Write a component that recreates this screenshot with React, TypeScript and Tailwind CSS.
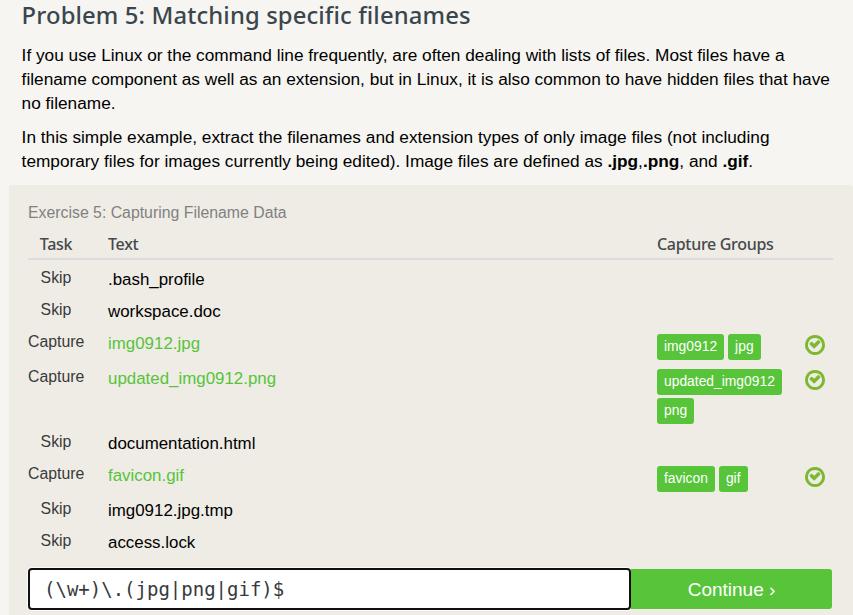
type Row = { text: string; groups?: string[]; height: string };

const rows: Row[] = [
  { text: '.bash_profile', height: 'h-8' },
  { text: 'workspace.doc', height: 'h-8' },
  { text: 'img0912.jpg', groups: ['img0912', 'jpg'], height: 'h-[35px]' },
  { text: 'updated_img0912.png', groups: ['updated_img0912', 'png'], height: 'h-[65px]' },
  { text: 'documentation.html', height: 'h-8' },
  { text: 'favicon.gif', groups: ['favicon', 'gif'], height: 'h-[35px]' },
  { text: 'img0912.jpg.tmp', height: 'h-8' },
  { text: 'access.lock', height: 'h-8' },
];

function CheckCircle() {
  return (
    <svg className="mt-2 size-5 fill-[#7db831]" viewBox="0 128 1536 1536" aria-hidden="true">
      <path d="M1171 723l-422 422q-19 19-45 19t-45-19l-294-294q-19-19-19-45t19-45l102-102q19-19 45-19t45 19l147 147 275-275q19-19 45-19t45 19l102 102q19 19 19 45t-19 45zm141 173q0-148-73-273t-198-198-273-73-273 73-198 198-73 273 73 273 198 198 273 73 273-73 198-198 73-273zm224 0q0 209-103 385.5t-279.5 279.5-385.5 103-385.5-103-279.5-279.5-103-385.5 103-385.5 279.5-279.5 385.5-103 385.5 103 279.5 279.5 103 385.5z" />
    </svg>
  );
}

function TableRow({ text, groups, height }: Row) {
  return (
    <div className={`grid grid-cols-[56px_573px_148px_28px] ${height}`}>
      <div className="pt-[3px] text-center text-[15.84px] leading-6 text-[#373a3c]">{groups ? 'Capture' : 'Skip'}</div>
      <div className={`pt-[5px] pl-6 text-[16.9px] leading-6 ${groups ? 'text-[#57c43a]' : 'text-black'}`}>{text}</div>
      <div className="flex flex-wrap content-start gap-x-1 gap-y-[3.45px] pt-[7px]">
        {groups?.map((g) => (
          <span key={g} className="h-[26px] rounded-[3px] bg-[#57c43a] px-[7px] text-[13.85px] leading-[25px] text-white">
            {g}
          </span>
        ))}
      </div>
      <div>{groups && <CheckCircle />}</div>
    </div>
  );
}

export default function App() {
  return (
    <div className="h-[615px] overflow-hidden bg-[#f6f5f1] font-['Liberation_Sans',Arial,sans-serif] text-[17.25px] leading-6 text-black">
      <header className="h-[185px] pl-[21.6px]">
        <h1 className="h-[43px] font-['Noto_Sans',sans-serif] text-[23.8px] leading-[30px] font-medium tracking-[0.13px] whitespace-nowrap text-[#3a464d]">
          Problem 5: Matching specific filenames
        </h1>
        <p className="mb-[10px] w-[820px]">
          If you use Linux or the command line frequently, are often dealing with lists of files. Most files have a
          filename component as well as an extension, but in Linux, it is also common to have hidden files that have no
          filename.
        </p>
        <p className="w-[800px]">
          In this simple example, extract the filenames and extension types of only image files (not including
          temporary files for images currently being edited). Image files are defined as <b>.jpg</b>,<b>.png</b>, and{' '}
          <b>.gif</b>.
        </p>
      </header>
      <main className="ml-[9px] h-[430px] rounded-t-[3px] bg-[#efece5] pt-4 pl-[19px]">
        <h2 className="h-[29px] text-[15.84px] text-[#818181]">Exercise 5: Capturing Filename Data</h2>
        <div className="mb-[3px] grid h-[30px] w-[805px] grid-cols-[56px_573px_1fr] border-b-2 border-[#dcdcdc] font-['Noto_Sans',sans-serif] text-[16px] leading-[28px] font-medium tracking-[-0.3px] text-[#444a4e]">
          <div className="text-center">Task</div>
          <div className="pl-6">Text</div>
          <div>Capture Groups</div>
        </div>
        {rows.map((row) => (
          <TableRow key={row.text} {...row} />
        ))}
        <div className="mt-[10px] flex h-[42px] items-center">
          <input
            className="h-[42px] w-[603px] rounded-[4px] border-2 border-[#101010] bg-white pl-[14px] font-['DejaVu_Sans_Mono',monospace] text-[19px] text-[#373a3c] ring-1 ring-white/80 outline-none"
            defaultValue="(\w+)\.(jpg|png|gif)$"
            aria-label="Pattern"
          />
          <button className="h-10 w-[201px] rounded-r-[3px] bg-[#57c43a] pt-0.5 text-[19px] text-white">Continue ›</button>
        </div>
      </main>
    </div>
  );
}
